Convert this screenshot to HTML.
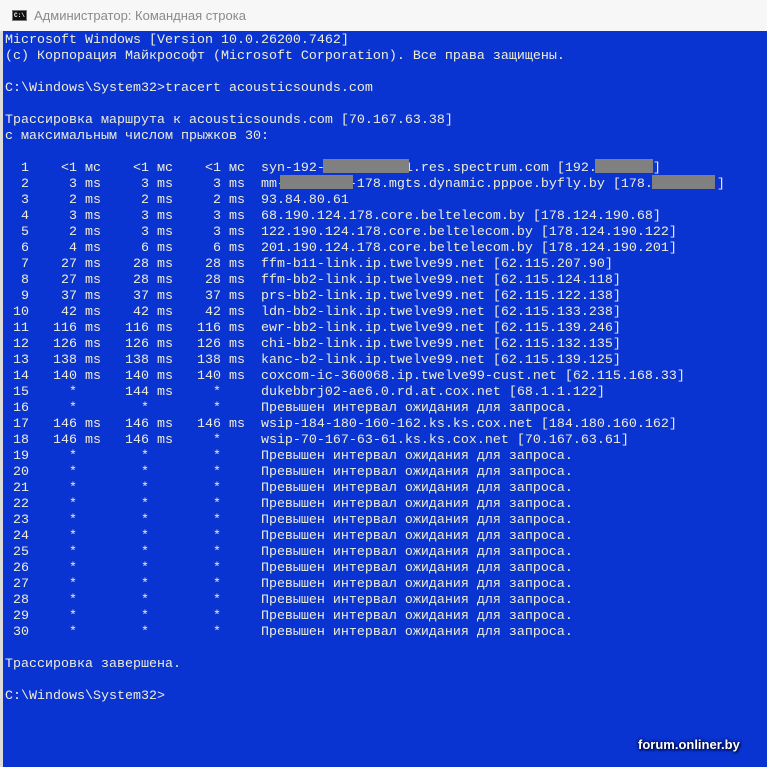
<!DOCTYPE html>
<html><head><meta charset="utf-8"><style>
html,body{margin:0;padding:0;width:767px;height:767px;overflow:hidden;background:#0a34d2;}
#title{position:absolute;left:0;top:0;width:767px;height:31px;background:#f7f7f7;}
#icon{position:absolute;left:12px;top:10px;width:15px;height:11px;background:#111;border:1px solid #777;box-sizing:border-box;}
#icon span{position:absolute;left:1px;top:1px;font:bold 6px "Liberation Mono",monospace;color:#fff;line-height:7px;}
#ttext{position:absolute;left:34px;top:8px;font:13px "Liberation Sans","DejaVu Sans",sans-serif;color:#8a8a8a;}
#lb{position:absolute;left:0;top:31px;width:3px;height:736px;background:#dcdcdc;}
pre{position:absolute;left:5px;top:33px;margin:0;font:13.33px/16px "Liberation Mono","DejaVu Sans Mono",monospace;color:#eeeed6;}
.b{position:absolute;background:#808080;}
#wm{position:absolute;left:638px;top:737px;font:bold 13px "Liberation Sans",sans-serif;color:#fff;text-shadow:0 0 3px #001060,0 0 3px #001060,1px 1px 2px #000;}
</style></head><body>
<div id="title"><div id="icon"><span>C:\</span></div><div id="ttext">Администратор: Командная строка</div></div>
<div id="lb"></div>
<pre>Microsoft Windows [Version 10.0.26200.7462]
(c) Корпорация Майкрософт (Microsoft Corporation). Все права защищены.

C:\Windows\System32>tracert acousticsounds.com

Трассировка маршрута к acousticsounds.com [70.167.63.38]
с максимальным числом прыжков 30:

  1    &lt;1 мс    &lt;1 мс    &lt;1 мс  syn-192-          1.res.spectrum.com [192.       ]
  2     3 ms     3 ms     3 ms  mm-        -178.mgts.dynamic.pppoe.byfly.by [178.        ]
  3     2 ms     2 ms     2 ms  93.84.80.61
  4     3 ms     3 ms     3 ms  68.190.124.178.core.beltelecom.by [178.124.190.68]
  5     2 ms     3 ms     3 ms  122.190.124.178.core.beltelecom.by [178.124.190.122]
  6     4 ms     6 ms     6 ms  201.190.124.178.core.beltelecom.by [178.124.190.201]
  7    27 ms    28 ms    28 ms  ffm-b11-link.ip.twelve99.net [62.115.207.90]
  8    27 ms    28 ms    28 ms  ffm-bb2-link.ip.twelve99.net [62.115.124.118]
  9    37 ms    37 ms    37 ms  prs-bb2-link.ip.twelve99.net [62.115.122.138]
 10    42 ms    42 ms    42 ms  ldn-bb2-link.ip.twelve99.net [62.115.133.238]
 11   116 ms   116 ms   116 ms  ewr-bb2-link.ip.twelve99.net [62.115.139.246]
 12   126 ms   126 ms   126 ms  chi-bb2-link.ip.twelve99.net [62.115.132.135]
 13   138 ms   138 ms   138 ms  kanc-b2-link.ip.twelve99.net [62.115.139.125]
 14   140 ms   140 ms   140 ms  coxcom-ic-360068.ip.twelve99-cust.net [62.115.168.33]
 15     *      144 ms     *     dukebbrj02-ae6.0.rd.at.cox.net [68.1.1.122]
 16     *        *        *     Превышен интервал ожидания для запроса.
 17   146 ms   146 ms   146 ms  wsip-184-180-160-162.ks.ks.cox.net [184.180.160.162]
 18   146 ms   146 ms     *     wsip-70-167-63-61.ks.ks.cox.net [70.167.63.61]
 19     *        *        *     Превышен интервал ожидания для запроса.
 20     *        *        *     Превышен интервал ожидания для запроса.
 21     *        *        *     Превышен интервал ожидания для запроса.
 22     *        *        *     Превышен интервал ожидания для запроса.
 23     *        *        *     Превышен интервал ожидания для запроса.
 24     *        *        *     Превышен интервал ожидания для запроса.
 25     *        *        *     Превышен интервал ожидания для запроса.
 26     *        *        *     Превышен интервал ожидания для запроса.
 27     *        *        *     Превышен интервал ожидания для запроса.
 28     *        *        *     Превышен интервал ожидания для запроса.
 29     *        *        *     Превышен интервал ожидания для запроса.
 30     *        *        *     Превышен интервал ожидания для запроса.

Трассировка завершена.

C:\Windows\System32&gt;</pre>
<div class="b" style="left:323px;top:159px;width:86px;height:14px"></div>
<div class="b" style="left:595px;top:159px;width:58px;height:14px"></div>
<div class="b" style="left:280px;top:175px;width:73px;height:14px"></div>
<div class="b" style="left:652px;top:175px;width:63px;height:14px"></div>
<div id="wm">forum.onliner.by</div>
</body></html>
